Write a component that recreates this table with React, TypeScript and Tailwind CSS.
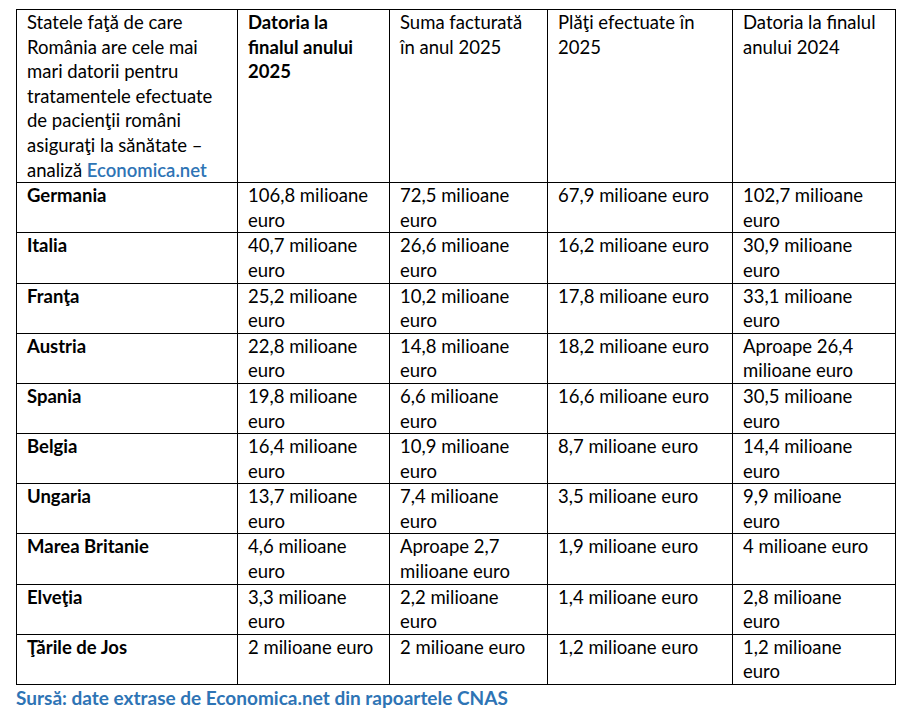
const header: { lines: string[]; bold?: boolean }[] = [
	{ lines: ["Datoria la", "finalul anului", "2025"], bold: true },
	{ lines: ["Suma facturată", "în anul 2025"] },
	{ lines: ["Plăţi efectuate în", "2025"] },
	{ lines: ["Datoria la finalul", "anului 2024"] },
];

const rows: string[][][] = [
	[["Germania"], ["106,8 milioane", "euro"], ["72,5 milioane", "euro"], ["67,9 milioane euro"], ["102,7 milioane", "euro"]],
	[["Italia"], ["40,7 milioane", "euro"], ["26,6 milioane", "euro"], ["16,2 milioane euro"], ["30,9 milioane", "euro"]],
	[["Franţa"], ["25,2 milioane", "euro"], ["10,2 milioane", "euro"], ["17,8 milioane euro"], ["33,1 milioane", "euro"]],
	[["Austria"], ["22,8 milioane", "euro"], ["14,8 milioane", "euro"], ["18,2 milioane euro"], ["Aproape 26,4", "milioane euro"]],
	[["Spania"], ["19,8 milioane", "euro"], ["6,6 milioane", "euro"], ["16,6 milioane euro"], ["30,5 milioane", "euro"]],
	[["Belgia"], ["16,4 milioane", "euro"], ["10,9 milioane", "euro"], ["8,7 milioane euro"], ["14,4 milioane", "euro"]],
	[["Ungaria"], ["13,7 milioane", "euro"], ["7,4 milioane", "euro"], ["3,5 milioane euro"], ["9,9 milioane", "euro"]],
	[["Marea Britanie"], ["4,6 milioane", "euro"], ["Aproape 2,7", "milioane euro"], ["1,9 milioane euro"], ["4 milioane euro"]],
	[["Elveţia"], ["3,3 milioane", "euro"], ["2,2 milioane", "euro"], ["1,4 milioane euro"], ["2,8 milioane", "euro"]],
	[["Ţările de Jos"], ["2 milioane euro"], ["2 milioane euro"], ["1,2 milioane euro"], ["1,2 milioane", "euro"]],
];

const cell = "border border-black align-top px-[10px] py-0";

function Lines({ lines }: { lines: string[] }) {
	return (
		<>
			{lines.map((l, i) => (
				<div key={i}>{l}</div>
			))}
		</>
	);
}

export default function App() {
	return (
		<div
			className="bg-white w-[917px] h-[712px] pt-[9px] pl-[16px] text-black text-[18.5px] leading-[24.6px]"
			style={{ fontFamily: "Lato, 'Open Sans', sans-serif" }}
		>
			<table className="table-fixed border-collapse w-[879px]">
				<colgroup>
					<col className="w-[221px]" />
					<col className="w-[152px]" />
					<col className="w-[158px]" />
					<col className="w-[185px]" />
					<col className="w-[163px]" />
				</colgroup>
				<thead>
					<tr>
						<th className={`${cell} text-left font-normal`}>
							<div>Statele faţă de care</div>
							<div>România are cele mai</div>
							<div>mari datorii pentru</div>
							<div>tratamentele efectuate</div>
							<div>de pacienţii români</div>
							<div>asiguraţi la sănătate –</div>
							<div>
								analiză <span className="font-semibold text-[#2e74b5]">Economica.net</span>
							</div>
						</th>
						{header.map((h, i) => (
							<th key={i} className={`${cell} text-left ${h.bold ? "font-bold" : "font-normal"}`}>
								<Lines lines={h.lines} />
							</th>
						))}
					</tr>
				</thead>
				<tbody>
					{rows.map((r, i) => (
						<tr key={i}>
							{r.map((c, j) => (
								<td key={j} className={`${cell} ${j === 0 ? "font-bold" : ""}`}>
									<Lines lines={c} />
								</td>
							))}
						</tr>
					))}
				</tbody>
			</table>
			<div className="mt-[1px] font-bold text-[19px] text-[#2e74b5]">
				Sursă: date extrase de Economica.net din rapoartele CNAS
			</div>
		</div>
	);
}
